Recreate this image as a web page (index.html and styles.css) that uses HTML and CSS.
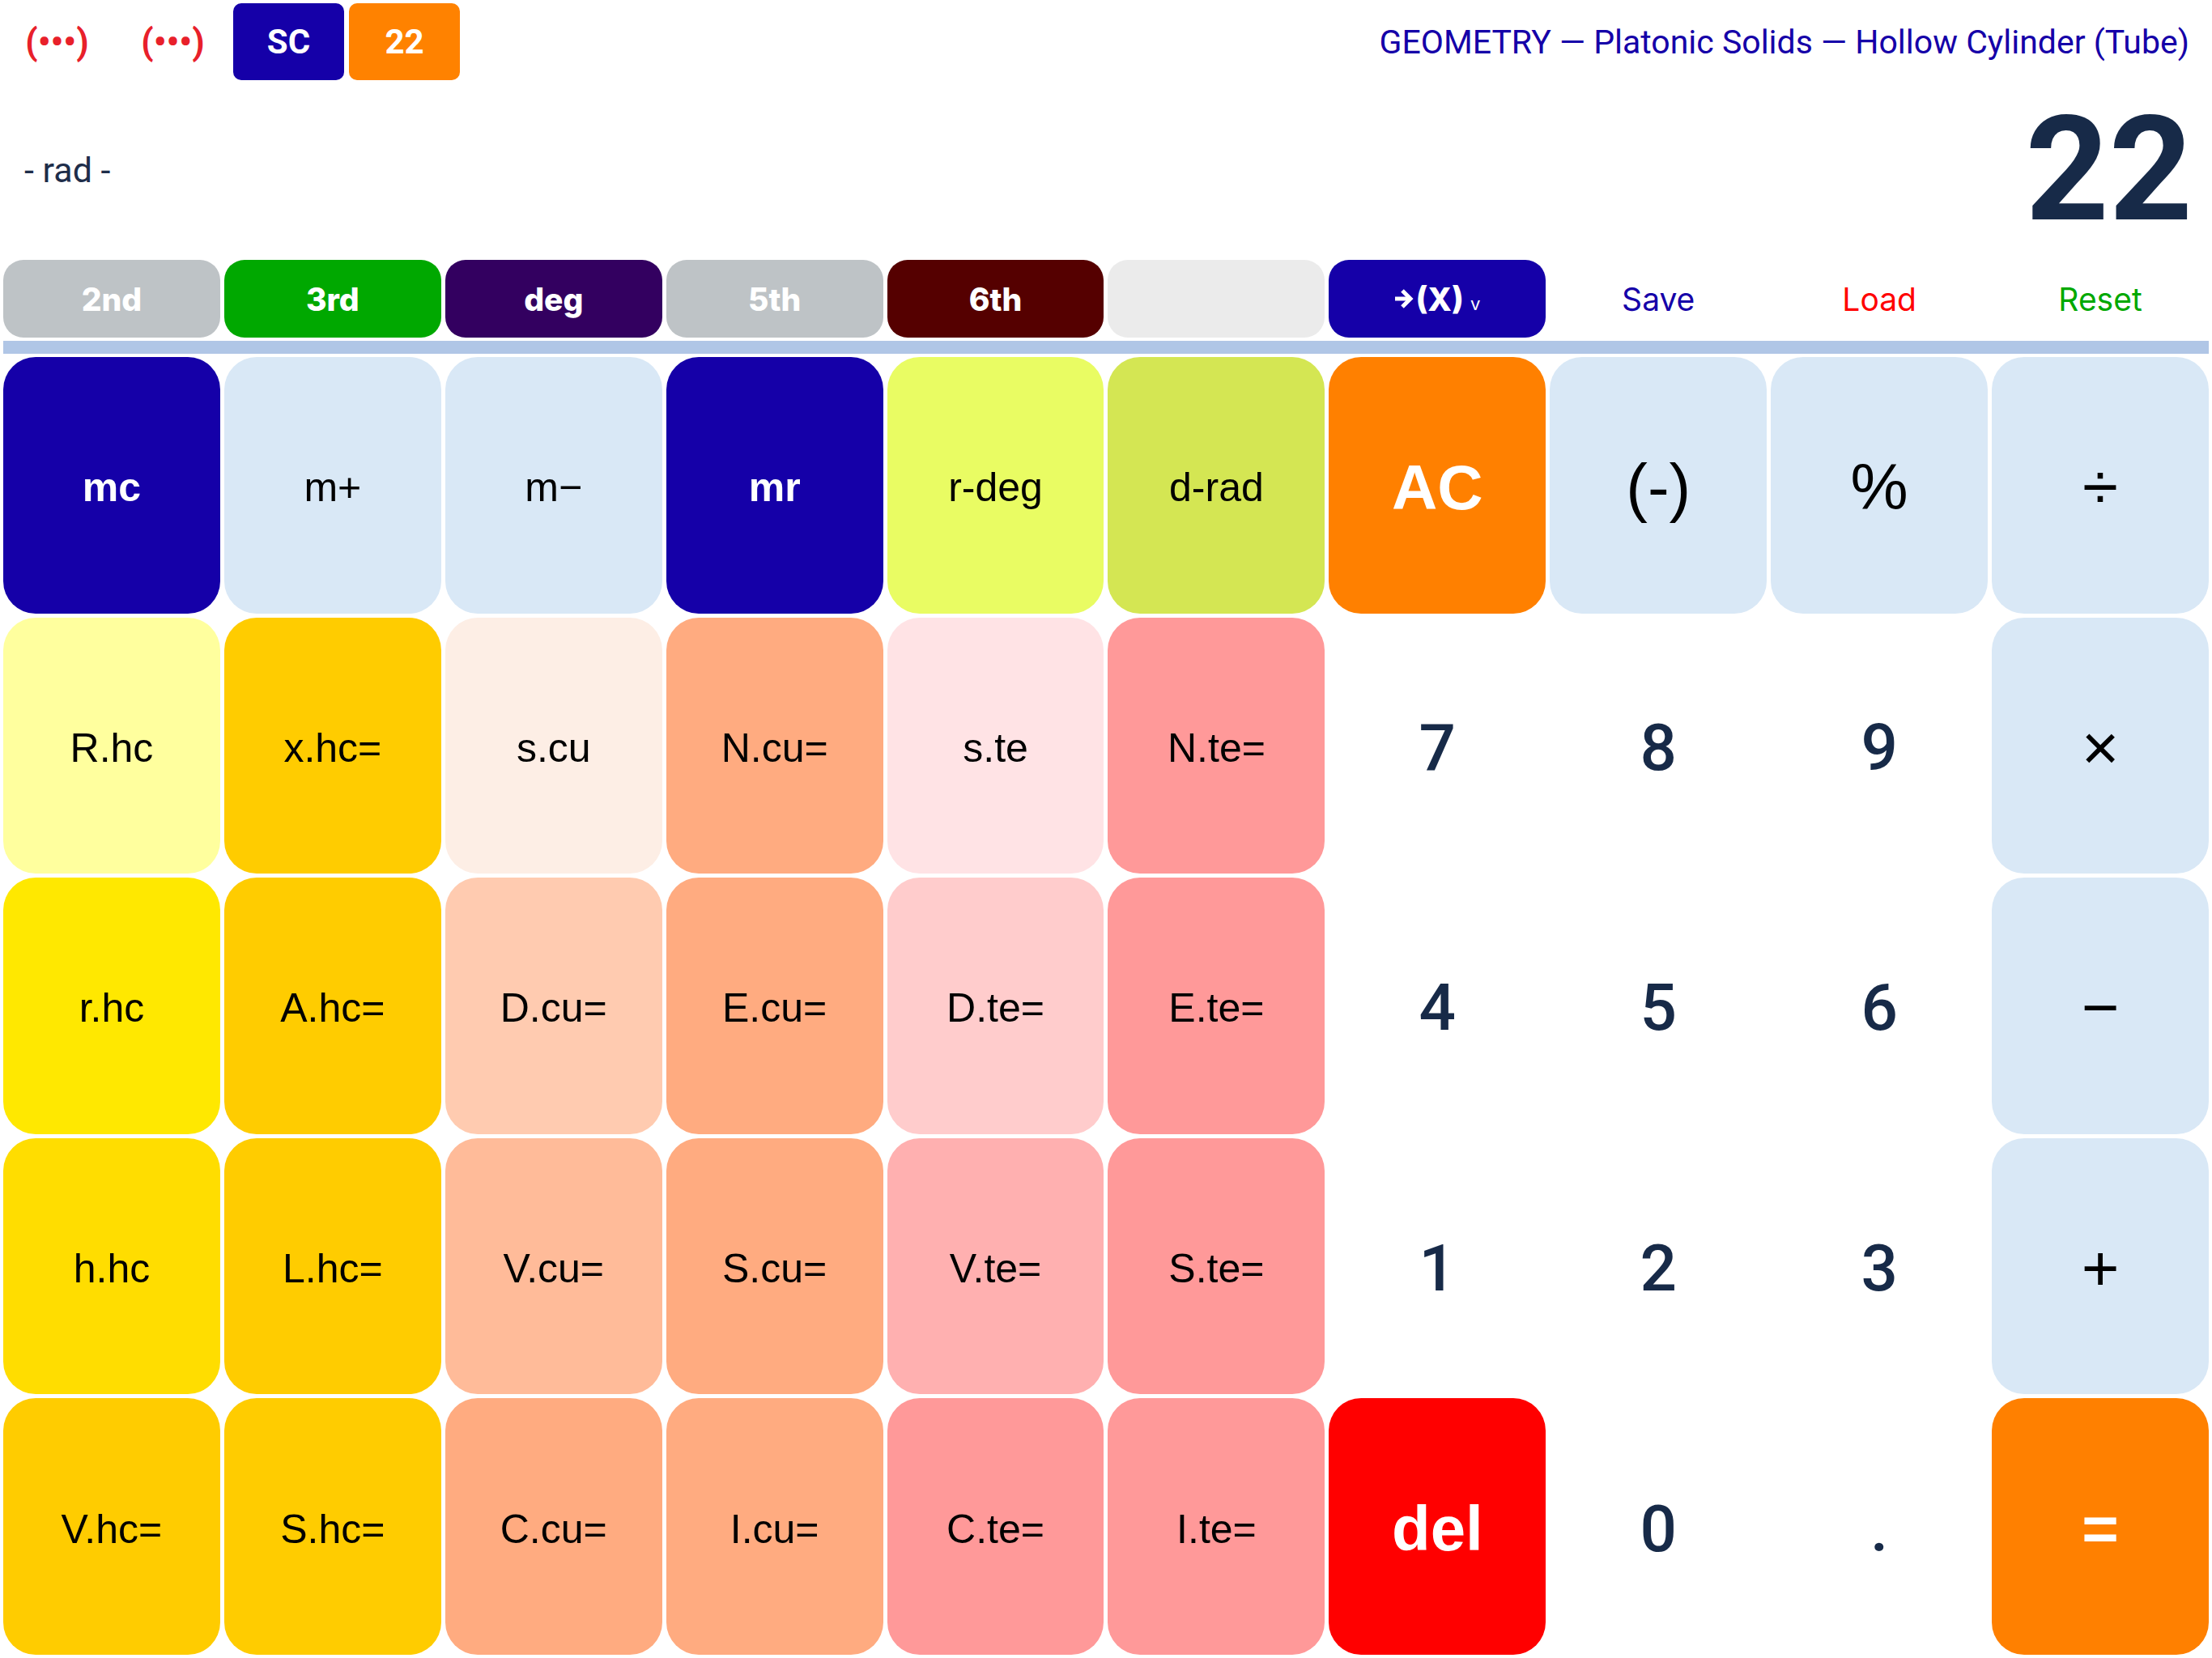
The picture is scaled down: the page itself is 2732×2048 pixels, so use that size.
FILE: index.html
```html
<!DOCTYPE html>
<html lang="en">
<head>
    <meta charset="UTF-8">
    <meta name="viewport" content="width=device-width, initial-scale=1.0">
    <title>Geometry Calculator</title>
    <link rel="stylesheet" href="styles.css">
</head>
<body>

    <div class="calc">
        <!-- Top bar: status + title -->
        <div class="top-bar">
            <div class="top-left">
                <span class="signal">(•••)</span>
                <span class="signal">(•••)</span>
                <span class="badge badge-sc">SC</span>
                <span class="badge badge-num">22</span>
            </div>
            <div class="title">GEOMETRY — Platonic Solids — Hollow Cylinder (Tube)</div>
        </div>

        <!-- Display -->
        <div class="display">
            <div class="mode">- rad -</div>
            <div class="result">22</div>
        </div>

        <!-- Toolbar -->
        <div class="toolbar">
            <button class="tool tool-gray">2nd</button>
            <button class="tool tool-green">3rd</button>
            <button class="tool tool-purple">deg</button>
            <button class="tool tool-gray">5th</button>
            <button class="tool tool-maroon">6th</button>
            <button class="tool tool-empty"></button>
            <button class="tool tool-blue">
                <svg class="arrow" width="24" height="28" viewBox="0 0 24 28">
                    <line x1="1" y1="14" x2="19" y2="14" stroke="#fff" stroke-width="5"/>
                    <polyline points="10,4 20,14 10,24" fill="none" stroke="#fff" stroke-width="5"/>
                </svg>(X)<span class="small-v">v</span>
            </button>
            <button class="tool tool-text text-blue">Save</button>
            <button class="tool tool-text text-red">Load</button>
            <button class="tool tool-text text-green">Reset</button>
        </div>

        <div class="divider"></div>

        <!-- Keypad -->
        <div class="keypad">
            <!-- row 1 -->
            <button class="key key-navy">mc</button>
            <button class="key key-light">m+</button>
            <button class="key key-light">m−</button>
            <button class="key key-navy">mr</button>
            <button class="key key-lime">r-deg</button>
            <button class="key key-olive">d-rad</button>
            <button class="key key-big key-orange">AC</button>
            <button class="key key-op key-light">(-)</button>
            <button class="key key-op key-light">%</button>
            <button class="key key-op key-light">÷</button>

            <!-- row 2 -->
            <button class="key key-cream">R.hc</button>
            <button class="key key-gold">x.hc=</button>
            <button class="key key-peach1">s.cu</button>
            <button class="key key-peach4">N.cu=</button>
            <button class="key key-pink1">s.te</button>
            <button class="key key-pink4">N.te=</button>
            <button class="key key-digit">7</button>
            <button class="key key-digit">8</button>
            <button class="key key-digit">9</button>
            <button class="key key-op key-light">×</button>

            <!-- row 3 -->
            <button class="key key-yellow">r.hc</button>
            <button class="key key-gold">A.hc=</button>
            <button class="key key-peach2">D.cu=</button>
            <button class="key key-peach4">E.cu=</button>
            <button class="key key-pink2">D.te=</button>
            <button class="key key-pink4">E.te=</button>
            <button class="key key-digit">4</button>
            <button class="key key-digit">5</button>
            <button class="key key-digit">6</button>
            <button class="key key-op key-light">−</button>

            <!-- row 4 -->
            <button class="key key-sun">h.hc</button>
            <button class="key key-gold">L.hc=</button>
            <button class="key key-peach3">V.cu=</button>
            <button class="key key-peach4">S.cu=</button>
            <button class="key key-pink3">V.te=</button>
            <button class="key key-pink4">S.te=</button>
            <button class="key key-digit">1</button>
            <button class="key key-digit">2</button>
            <button class="key key-digit">3</button>
            <button class="key key-op key-light">+</button>

            <!-- row 5 -->
            <button class="key key-gold">V.hc=</button>
            <button class="key key-gold">S.hc=</button>
            <button class="key key-peach4">C.cu=</button>
            <button class="key key-peach4">I.cu=</button>
            <button class="key key-pink4">C.te=</button>
            <button class="key key-pink4">I.te=</button>
            <button class="key key-big key-red">del</button>
            <button class="key key-digit">0</button>
            <button class="key key-digit">.</button>
            <button class="key key-big key-orange">=</button>
        </div>
    </div>

</body>
</html>
```

FILE: styles.css
```css
/* Basic Reset */
* {
    margin: 0;
    padding: 0;
    box-sizing: border-box;
}

body {
    font-family: "Liberation Sans", Arial, sans-serif;
    background-color: #ffffff;
    width: 2732px;
    height: 2048px;
    overflow: hidden;
}

.calc {
    display: flex;
    flex-direction: column;
    height: 100%;
}

/* Top bar */
.top-bar {
    display: flex;
    justify-content: space-between;
    align-items: center;
    height: 103px;
    padding: 4px 28px 4px 2px;
}

.top-left {
    display: flex;
    gap: 6px;
    height: 95px;
}

.signal {
    width: 137px;
    display: flex;
    align-items: center;
    justify-content: center;
    color: #e8202a;
    font: bold 44px Roboto, sans-serif;
}

.badge {
    width: 137px;
    display: flex;
    align-items: center;
    justify-content: center;
    border-radius: 10px;
    color: #ffffff;
    font: bold 42px Roboto, sans-serif;
}

.badge-sc {
    background-color: #1500a8;
}

.badge-num {
    background-color: #ff8200;
}

.title {
    font: 41px Roboto, sans-serif;
    color: #1500a8;
}

/* Display */
.display {
    height: 214px;
    display: flex;
    justify-content: space-between;
    align-items: center;
    padding: 0 24px 0 30px;
}

.mode {
    font: 43px Roboto, sans-serif;
    color: #1e2d4a;
}

.result {
    font: bold 180px/1 Roboto, sans-serif;
    color: #172a48;
}

/* Toolbar */
.toolbar {
    display: grid;
    grid-template-columns: repeat(10, 1fr);
    gap: 5px;
    height: 104px;
    padding: 4px;
}

.tool {
    border: none;
    border-radius: 25px;
    color: #ffffff;
    font: 800 39px Inter, sans-serif;
    display: flex;
    align-items: center;
    justify-content: center;
}

.tool-gray { background-color: #bec3c6; }
.tool-green { background-color: #00a800; }
.tool-purple { background-color: #330060; }
.tool-maroon { background-color: #550000; }
.tool-empty { background-color: #ebebeb; }
.tool-blue { background-color: #1500a8; }

.tool .arrow {
    margin-right: 2px;
}

.small-v {
    font-size: 22px;
    font-weight: normal;
    margin-left: 8px;
    align-self: center;
    padding-top: 12px;
}

.tool-text {
    background: none;
    font-weight: normal;
}

.text-blue { color: #1500a8; }
.text-red { color: #ff0000; }
.text-green { color: #00a800; }

.divider {
    height: 16px;
    margin: 0 4px;
    background-color: #b0c6e6;
}

/* Keypad */
.keypad {
    flex: 1;
    display: grid;
    grid-template-columns: repeat(10, 1fr);
    grid-template-rows: repeat(5, 1fr);
    gap: 5px;
    padding: 4px;
}

.key {
    border: none;
    border-radius: 40px;
    padding-top: 6px;
    font-family: "Liberation Sans", Arial, sans-serif;
    font-size: 50px;
    color: #000000;
    display: flex;
    align-items: center;
    justify-content: center;
}

.key-op {
    font-size: 80px;
}

.key-big {
    font-size: 78px;
    font-weight: bold;
    color: #ffffff;
}

.key-digit {
    background: none;
    font: 500 80px Roboto, sans-serif;
    color: #172a48;
}

.key-navy { background-color: #1500a8; color: #ffffff; font-weight: bold; }
.key-light { background-color: #d9e8f6; }
.key-lime { background-color: #e9fc63; }
.key-olive { background-color: #d4e653; }
.key-orange { background-color: #ff8000; }
.key-red { background-color: #ff0000; }

.key-cream { background-color: #ffff9e; }
.key-yellow { background-color: #ffe800; }
.key-sun { background-color: #ffdd00; }
.key-gold { background-color: #ffcc00; }

.key-peach1 { background-color: #fdeee5; }
.key-peach2 { background-color: #ffcbb0; }
.key-peach3 { background-color: #ffbb99; }
.key-peach4 { background-color: #ffab80; }

.key-pink1 { background-color: #ffe3e5; }
.key-pink2 { background-color: #ffcccc; }
.key-pink3 { background-color: #ffb0b0; }
.key-pink4 { background-color: #ff9999; }
```
